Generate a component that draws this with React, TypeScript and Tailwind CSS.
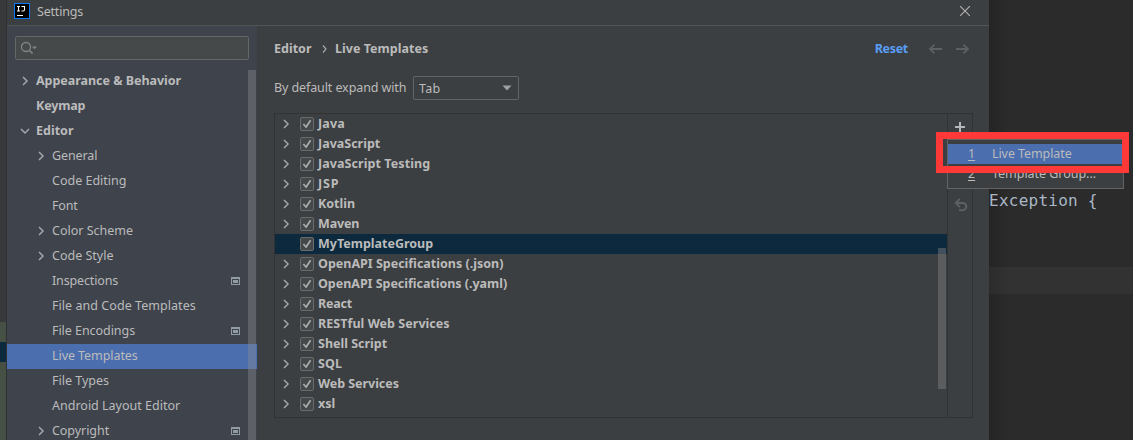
import React from "react";

type SideItem = {
  label: string;
  level: 0 | 1;
  state?: "closed" | "open";
  badge?: boolean;
  selected?: boolean;
  text: string;
};

const sideItems: SideItem[] = [
  { label: "Appearance & Behavior", level: 0, state: "closed", text: "tracking-[-0.03px]" },
  { label: "Keymap", level: 0, text: "tracking-[-0.15px]" },
  { label: "Editor", level: 0, state: "open", text: "tracking-[0px]" },
  { label: "General", level: 1, state: "closed", text: "tracking-[-0.1px]" },
  { label: "Code Editing", level: 1, text: "tracking-[0px]" },
  { label: "Font", level: 1, text: "tracking-[-0.2px]" },
  { label: "Color Scheme", level: 1, state: "closed", text: "tracking-[0px]" },
  { label: "Code Style", level: 1, state: "closed", text: "tracking-[0px]" },
  { label: "Inspections", level: 1, badge: true, text: "tracking-[-0.15px]" },
  { label: "File and Code Templates", level: 1, text: "tracking-[0.05px]" },
  { label: "File Encodings", level: 1, badge: true, text: "tracking-[-0.05px]" },
  { label: "Live Templates", level: 1, selected: true, text: "tracking-[-0.07px]" },
  { label: "File Types", level: 1, text: "tracking-[0px]" },
  { label: "Android Layout Editor", level: 1, text: "tracking-[0px]" },
  { label: "Copyright", level: 1, state: "closed", badge: true, text: "tracking-[-0.05px]" },
];

const groups: { label: string; text: string }[] = [
  { label: "Java", text: "tracking-[0.15px]" },
  { label: "JavaScript", text: "tracking-[0px]" },
  { label: "JavaScript Testing", text: "tracking-[0.08px]" },
  { label: "JSP", text: "tracking-[0.8px]" },
  { label: "Kotlin", text: "tracking-[0px]" },
  { label: "Maven", text: "tracking-[-0.15px]" },
  { label: "MyTemplateGroup", text: "tracking-[0px]" },
  { label: "OpenAPI Specifications (.json)", text: "tracking-[0px]" },
  { label: "OpenAPI Specifications (.yaml)", text: "tracking-[-0.03px]" },
  { label: "React", text: "tracking-[-0.2px]" },
  { label: "RESTful Web Services", text: "tracking-[0.05px]" },
  { label: "Shell Script", text: "tracking-[0px]" },
  { label: "SQL", text: "tracking-[0.1px]" },
  { label: "Web Services", text: "tracking-[-0.05px]" },
  { label: "xsl", text: "tracking-[0px]" },
];

function Chevron({ open = false }: { open?: boolean }) {
  return (
    <svg width="10" height="10" viewBox="0 0 10 10" fill="none" stroke="#a4a7aa" strokeWidth="1.5" className="shrink-0">
      <path d={open ? "M1 3L5 7L9 3" : "M3 1L7 5L3 9"} />
    </svg>
  );
}

function ProjectBadge() {
  return (
    <svg width="9" height="8" viewBox="0 0 9 8" className="shrink-0">
      <path fill="#919ba3" fillRule="evenodd" d="M0 0H9V8H0ZM1 2V7H8V2Z" />
      <rect x="2" y="3" width="5" height="3" fill="#919ba3" />
    </svg>
  );
}

function Checkbox() {
  return (
    <svg width="14" height="14" viewBox="0 0 14 14" className="shrink-0">
      <rect x=".5" y=".5" width="13" height="13" rx="1.5" fill="#43494a" stroke="#6b6b6b" />
      <path d="M3.4 7L6.1 10L10.6 3.3" fill="none" stroke="#a9a9a9" strokeWidth="1.8" />
    </svg>
  );
}

function Sidebar() {
  return (
    <aside className="relative flex w-[250px] shrink-0 flex-col bg-[#3e434c] pt-[10px]">
      <div className="ml-2 flex h-6 w-[234px] shrink-0 items-center rounded-[2px] border border-[#646766] bg-[#45494a] pl-[5px]">
        <svg width="18" height="14" viewBox="0 0 18 14" fill="none">
          <circle cx="5" cy="6" r="4.5" stroke="#7f8487" strokeWidth="1.3" />
          <path d="M8.3 9.3L11.6 12.6" stroke="#7f8487" strokeWidth="1.6" />
          <path d="M11 5.5H16L13.5 8.3Z" fill="#7f8487" />
        </svg>
      </div>
      <nav className="mt-[9px] flex flex-col text-[12.5px]">
        {sideItems.map((item) => (
          <div
            key={item.label}
            className={`flex h-[25px] shrink-0 items-center ${item.level === 0 ? "pl-[13px] font-bold" : "pl-[29px]"} ${item.selected ? "bg-[#4b6eaf]" : ""}`}
          >
            <span className="flex w-4 shrink-0 items-center pb-px">
              {item.state && <Chevron open={item.state === "open"} />}
            </span>
            <span className={`whitespace-nowrap ${item.text}`}>{item.label}</span>
            {item.badge && (
              <span className="mr-[17px] ml-auto flex pb-[2px]">
                <ProjectBadge />
              </span>
            )}
          </div>
        ))}
      </nav>
      <div className="absolute top-[44px] right-[1px] bottom-0 w-2 bg-[#8b8c92]/40" />
    </aside>
  );
}

function Toolbar() {
  return (
    <div className="flex w-[25px] flex-col items-center border-l border-[#323232] pt-2">
      <svg width="10" height="10" viewBox="0 0 10 10" fill="none" stroke="#b4b6b8" strokeWidth="2">
        <path d="M5 0V10M0 5H10" />
      </svg>
      <svg width="14" height="14" viewBox="0 0 14 14" fill="none" stroke="#5d6062" strokeWidth="2" className="mt-[66px] ml-[2px]">
        <path d="M2 5H8.7A3.6 3.6 0 0 1 8.7 12.2H5M5.8 .9L1.7 5L5.8 9.1" />
      </svg>
    </div>
  );
}

function TemplatePopup() {
  return (
    <div className="absolute top-[139px] left-[947px] flex h-[50px] w-[177px] flex-col border border-[#646464] bg-[#3c3f41] pt-1 text-[12.5px]">
      <div className="mr-px flex h-5 items-center bg-[#4b6eaf] pl-5">
        <span className="w-[24px] underline underline-offset-2">1</span>
        <span className="tracking-[-0.08px]">Live Template</span>
      </div>
      <div className="mr-px flex h-5 items-center pl-5">
        <span className="w-[24px] underline underline-offset-2">2</span>
        <span className="tracking-[-0.03px]">Template Group...</span>
      </div>
    </div>
  );
}

export default function App() {
  return (
    <div className="relative flex h-[440px] w-[1133px] overflow-hidden bg-[#2b2b2b] font-['Noto_Sans',sans-serif] text-[12.5px] leading-none text-[#bbbbbb]">
      <div className="flex w-[7px] shrink-0 flex-col border-r border-[#303132] bg-[#38393a]">
        <div className="h-[322px]" />
        <div className="h-5 bg-[#465045]" />
        <div className="h-5 bg-[#0d293e]" />
        <div className="flex-1 bg-[#465045]" />
      </div>

      <div className="flex w-[982px] shrink-0 flex-col bg-[#3c3f41]">
        <header className="flex h-[26px] shrink-0 items-center border-b border-[#515355] pr-[19px] pl-[7px]">
          <svg width="16" height="16" viewBox="0 0 16 16" className="mb-[3px]">
            <rect x=".5" y=".5" width="15" height="15" fill="#000" stroke="#087cfa" />
            <path d="M3 3.5H6M4.5 3.5V8M3 8H6M7.5 3.5H10.5V6.8Q10.5 8 9.2 8H7.5M3 12.5H9" fill="none" stroke="#fff" strokeWidth="1.1" />
          </svg>
          <span className="ml-[7px] tracking-[-0.2px]">Settings</span>
          <svg width="10" height="10" viewBox="0 0 10 10" fill="none" stroke="#b0b2b3" strokeWidth="1.1" className="mb-[3px] ml-auto">
            <path d="M0 0L10 10M10 0L0 10" />
          </svg>
        </header>

        <div className="flex min-h-0 flex-1">
          <Sidebar />
          <main className="flex w-[732px] flex-col pt-3 pr-4 pl-[17px]">
            <div className="flex h-[22px] items-center font-bold">
              <span className="w-[48px]">Editor</span>
              <svg width="5" height="8" viewBox="0 0 5 8" fill="none" stroke="#a4a7aa" strokeWidth="1.2">
                <path d="M1 .5L4 4L1 7.5" />
              </svg>
              <span className="ml-2 tracking-[0.03px]">Live Templates</span>
              <span className="ml-auto tracking-[-0.3px] text-[#589df6]">Reset</span>
              <svg width="13" height="10" viewBox="0 0 13 10" fill="none" stroke="#5d6062" strokeWidth="1.8" className="ml-[21px]">
                <path d="M13 5H1M5.5 .7L1 5L5.5 9.3" />
              </svg>
              <svg width="13" height="10" viewBox="0 0 13 10" fill="none" stroke="#5d6062" strokeWidth="1.8" className="mr-1 ml-[14px]">
                <path d="M0 5H12M7.5 .7L12 5L7.5 9.3" />
              </svg>
            </div>

            <div className="mt-4 flex h-6 items-center">
              <span className="w-[139px] tracking-[-0.1px] whitespace-nowrap">By default expand with</span>
              <div className="flex h-6 w-[106px] items-center rounded-[2px] border border-[#646464] pr-[6px] pl-[5px]">
                <span className="pt-[2px] tracking-[0.3px]">Tab</span>
                <svg width="10" height="6" viewBox="0 0 10 6" className="ml-auto">
                  <path d="M.5 .5H9.5L5 5.5Z" fill="#9da0a3" />
                </svg>
              </div>
            </div>

            <div className="mt-[13px] flex h-[305px] w-[699px] border border-[#323232]">
              <div className="relative flex flex-1 flex-col font-bold">
                {groups.map(({ label, text }) => {
                  const selected = label === "MyTemplateGroup";
                  return (
                    <div key={label} className={`flex h-5 shrink-0 items-center pl-[6px] ${selected ? "bg-[#0d293e]" : ""}`}>
                      <span className="flex w-[19px] shrink-0 pb-px">{!selected && <Chevron />}</span>
                      <Checkbox />
                      <span className={`ml-1 whitespace-nowrap ${text}`}>{label}</span>
                    </div>
                  );
                })}
                <div className="absolute top-[134px] right-[1px] h-[141px] w-2 bg-[#808080]/45" />
              </div>
              <Toolbar />
            </div>
          </main>
        </div>
      </div>

      <div className="flex flex-1 flex-col bg-linear-to-r from-[#242424] to-[#2b2b2b] to-[18px]">
        <div className="flex h-[267px] items-start pt-[192px]">
          <code className="font-['DejaVu_Sans_Mono',monospace] text-[16px] leading-[18px] tracking-[0.25px] whitespace-pre text-[#a9b7c6]">{"Exception {"}</code>
        </div>
        <div className="h-[27px] bg-linear-to-r from-[#2b2b2b] to-[#323232] to-[18px]" />
      </div>

      <TemplatePopup />
      <div className="absolute top-[132px] left-[936px] h-[41px] w-[193px] border-[7px] border-[#ff3838]" />
    </div>
  );
}
